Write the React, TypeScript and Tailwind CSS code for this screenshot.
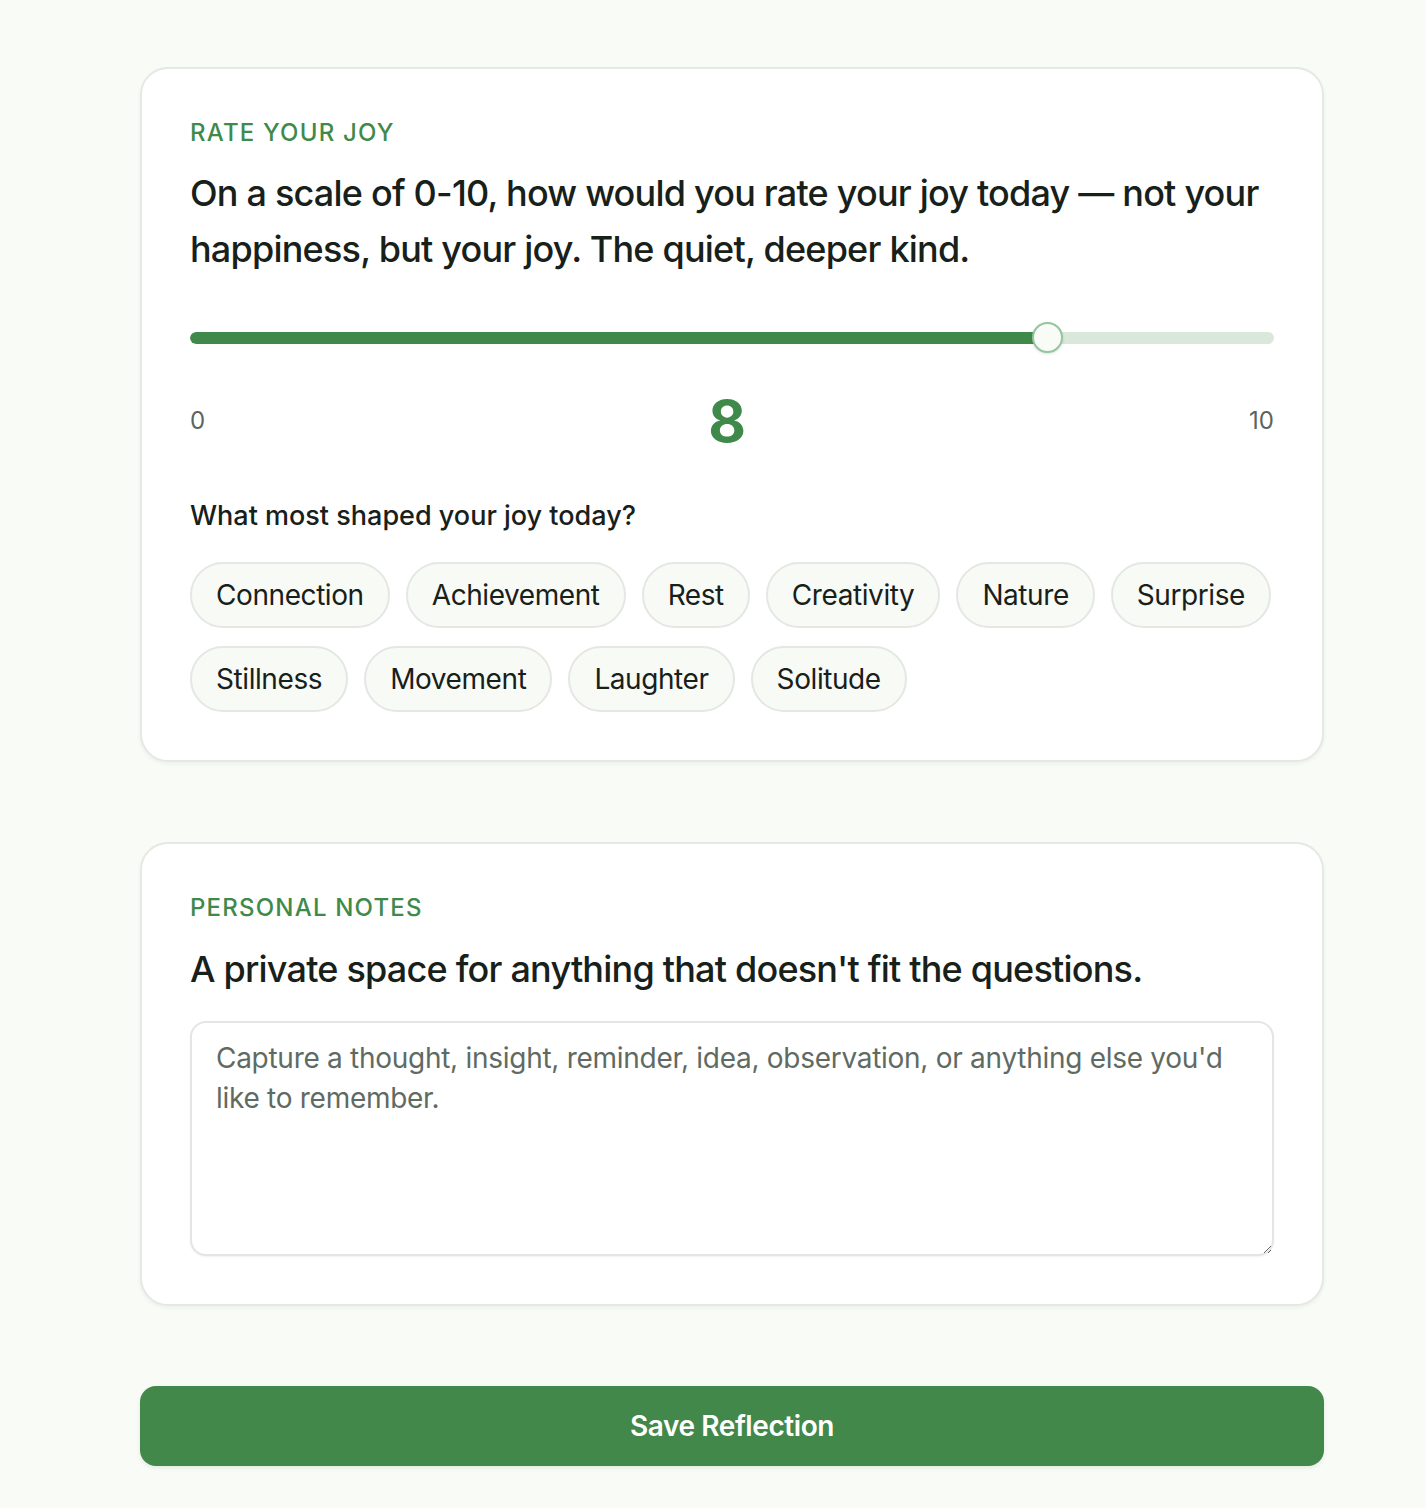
import { useState } from 'react';

// ─── Data ─────────────────────────────────────────────────────────────────────

const FACTORS = [
  'Connection',
  'Achievement',
  'Rest',
  'Creativity',
  'Nature',
  'Surprise',
  'Stillness',
  'Movement',
  'Laughter',
  'Solitude'
];

const THUMB = 31;

// ─── Pieces ───────────────────────────────────────────────────────────────────

function SectionLabel({ children }: { children: string }) {
  return (
    <div className="text-[24px] leading-[32px] font-medium tracking-[0.05em] text-[#3f8a4b]">
      {children}
    </div>
  );
}

function JoySlider({ value, max }: { value: number; max: number }) {
  const pct = value / max;
  const left = `calc(${pct} * (100% - ${THUMB}px))`;
  const fill = `calc(${pct} * (100% - ${THUMB}px) + ${THUMB / 2}px)`;

  return (
    <div className="relative flex h-[31px] items-center">
      <div className="h-3 w-full overflow-hidden rounded-full bg-[#d9e8da]">
        <div className="h-full rounded-full bg-[#3f8a4b]" style={{ width: fill }} />
      </div>
      <div
        className="absolute top-0 h-[31px] w-[31px] rounded-full border-2 border-[#93c69e] bg-[#f8fbf6] shadow-[0_1px_3px_rgba(0,0,0,0.12)]"
        style={{ left }}
      />
    </div>
  );
}

// ─── Component ────────────────────────────────────────────────────────────────

export default function App() {
  const [selected, setSelected] = useState<string[]>([]);
  const [notes, setNotes] = useState('');

  const toggle = (f: string) =>
    setSelected(s => (s.includes(f) ? s.filter(x => x !== f) : [...s, f]));

  return (
    <div className="min-h-screen bg-[#f9fbf7] pt-[67px] pb-[42px] font-['Inter',sans-serif] text-[#18201a]">
      <div className="ml-[140px] flex w-[1184px] flex-col">
        {/* Rate your joy */}
        <section className="rounded-[28px] border-2 border-[#e5e8e3] bg-white px-[48px] py-[48px] shadow-[0_2px_4px_rgba(0,0,0,0.05)]">
          <SectionLabel>RATE YOUR JOY</SectionLabel>
          <h2 className="mt-[16px] text-[36px] leading-[56px] font-medium tracking-[-0.022em]">
            On a scale of 0-10, how would you rate your joy today — not your happiness, but your
            joy. The quiet, deeper kind.
          </h2>

          <div className="mt-[45px]">
            <JoySlider value={8} max={10} />
          </div>

          <div className="mt-[39px] flex items-center justify-between">
            <span className="text-[24px] leading-[32px] text-[#5b645d]">0</span>
            <span className="text-[58px] leading-none font-bold text-[#3f8a4b]">8</span>
            <span className="text-[24px] leading-[32px] text-[#5b645d]">10</span>
          </div>

          <h3 className="mt-[48px] text-[27px] leading-[36px] font-medium">
            What most shaped your joy today?
          </h3>

          <div className="mt-[28px] flex flex-wrap gap-x-[16px] gap-y-[18px]">
            {FACTORS.map(f => {
              const on = selected.includes(f);
              return (
                <button
                  key={f}
                  type="button"
                  onClick={() => toggle(f)}
                  className={
                    on
                      ? 'h-[66px] rounded-full border-2 border-[#3f8a4b] bg-[#e6f1e7] px-6 text-[28px] tracking-[-0.015em] text-[#2f6f3a]'
                      : 'h-[66px] rounded-full border-2 border-[#e4e7e3] bg-[#f8faf6] px-6 text-[28px] tracking-[-0.015em] text-[#18201a]'
                  }
                >
                  {f}
                </button>
              );
            })}
          </div>
        </section>

        {/* Personal notes */}
        <section className="mt-[80px] rounded-[28px] border-2 border-[#e5e8e3] bg-white px-[48px] py-[48px] shadow-[0_2px_4px_rgba(0,0,0,0.05)]">
          <SectionLabel>PERSONAL NOTES</SectionLabel>
          <h2 className="mt-[17px] text-[36px] leading-[56px] font-medium tracking-[-0.022em]">
            A private space for anything that doesn't fit the questions.
          </h2>
          <textarea
            value={notes}
            onChange={e => setNotes(e.target.value)}
            placeholder="Capture a thought, insight, reminder, idea, observation, or anything else you'd like to remember."
            className="mt-[24px] block h-[235px] w-full rounded-[16px] border-2 border-[#e3e6e2] bg-white px-6 py-[15px] text-[28px] leading-[40px] tracking-[-0.01em] text-[#18201a] shadow-[0_1px_2px_rgba(0,0,0,0.06)] outline-none placeholder:text-[#5f6b62]"
          />
        </section>

        <button
          type="button"
          className="mt-[80px] h-[80px] w-full rounded-[16px] bg-[#42884b] text-[28px] font-semibold tracking-[-0.015em] text-white shadow-[0_2px_4px_rgba(0,0,0,0.08)]"
        >
          Save Reflection
        </button>
      </div>
    </div>
  );
}
